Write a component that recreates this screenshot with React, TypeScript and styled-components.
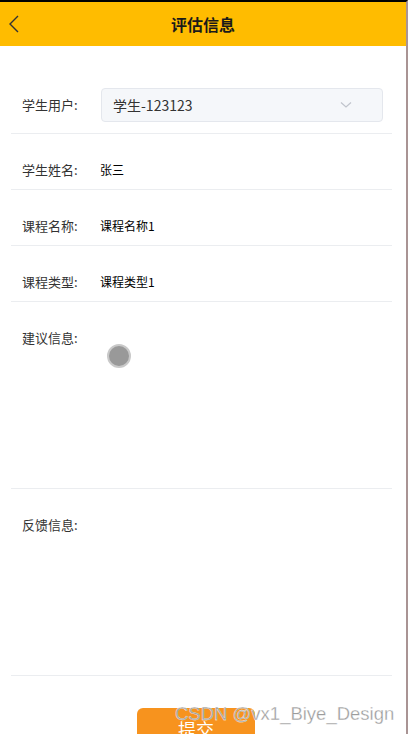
import styled, { createGlobalStyle } from 'styled-components';

const GlobalStyle = createGlobalStyle`
    html, body{
        margin: 0;
        padding: 0;
        background: #fff;
    }
    body{
        font-family: "Noto Sans CJK SC", "Noto Sans", sans-serif;
        color: #333;
    }
`;

const fields = [
    { label: '学生姓名:', value: '张三' },
    { label: '课程名称:', value: '课程名称1' },
    { label: '课程类型:', value: '课程类型1' },
];

export default function App() {
    return (
        <Page>
            <GlobalStyle />
            <Header>
                <BackButton>
                    <svg width="12" height="20" viewBox="0 0 12 20">
                        <path d="M10 2 L2 10 L10 18" fill="none" stroke="#333" strokeWidth="1.4" />
                    </svg>
                </BackButton>
                <Title>评估信息</Title>
            </Header>
            <Form>
                <Row $first>
                    <Label>学生用户:</Label>
                    <Select>
                        <span>学生-123123</span>
                        <svg width="12" height="8" viewBox="0 0 12 8">
                            <path d="M1 1.5 L6 6 L11 1.5" fill="none" stroke="#c0c4cc" strokeWidth="1.2" />
                        </svg>
                    </Select>
                </Row>
                {fields.map(f => (
                    <Row key={f.label}>
                        <Label>{f.label}</Label>
                        <Value>{f.value}</Value>
                    </Row>
                ))}
                <Row $tall>
                    <Label>建议信息:</Label>
                    <TextArea />
                </Row>
                <Row $tall>
                    <Label>反馈信息:</Label>
                    <TextArea />
                </Row>
                <Actions>
                    <SubmitButton>提交</SubmitButton>
                </Actions>
            </Form>
            <Cursor />
            <Watermark>CSDN @vx1_Biye_Design</Watermark>
        </Page>
    )
}

const Page = styled.div`
    position: relative;
    width: 408px;
    height: 734px;
    box-sizing: border-box;
    border-top: 2px solid #000;
    border-right: 2px solid #a99494;
    overflow: hidden;
    background: #fff;
`;

const Header = styled.div`
    position: relative;
    height: 44px;
    background-color: #ffbc00;
    display: flex;
    align-items: center;
    justify-content: center;
`;

const BackButton = styled.div`
    position: absolute;
    left: 8px;
    top: 12px;
    width: 12px;
    height: 20px;
    display: flex;
`;

const Title = styled.div`
    font-size: 16px;
    font-weight: bold;
    color: #1a1a1a;
`;

const Form = styled.div`
    padding-top: 15px;
`;

const Row = styled.div<{ $tall?: boolean; $first?: boolean }>`
    margin: 0 14px 0 11px;
    padding: ${({ $first }) => ($first ? '27px 0 11px 11px' : '27px 0 10px 11px')};
    border-bottom: 1px solid #ebedf0;
    display: flex;
    align-items: ${({ $tall }) => ($tall ? 'flex-start' : 'center')};
`;

const Label = styled.div`
    width: 79px;
    flex-shrink: 0;
    font-size: 13px;
    line-height: 18px;
    color: #333;
`;

const Value = styled.div`
    font-size: 12px;
    line-height: 18px;
    color: #000;
    margin-left: -1px;
`;

const Select = styled.div`
    width: 282px;
    height: 34px;
    box-sizing: border-box;
    background: #f5f7fa;
    border: 1px solid #e4e7ed;
    border-radius: 4px;
    display: flex;
    align-items: center;
    justify-content: space-between;
    padding: 0 30px 0 11px;
    font-size: 14px;
    color: #333;
`;

const TextArea = styled.div`
    flex: 1;
    height: 149px;
`;

const Actions = styled.div`
    display: flex;
    justify-content: center;
    padding: 32px 14px 0 0;
`;

const SubmitButton = styled.div`
    width: 118px;
    height: 40px;
    border-radius: 6px;
    background-color: #f7931e;
    color: #fff;
    font-size: 18px;
    display: flex;
    justify-content: center;
    padding-top: 8px;
    box-sizing: border-box;
`;

const Cursor = styled.div`
    position: absolute;
    left: 107px;
    top: 342px;
    width: 20px;
    height: 20px;
    border-radius: 50%;
    background: #999;
    border: 2px solid #c9c9c9;
`;

const Watermark = styled.div`
    position: absolute;
    left: 175px;
    top: 701px;
    font-family: "Liberation Sans", sans-serif;
    font-size: 18.5px;
    color: #9c9c9c;
    -webkit-text-stroke: 0.3px #fff;
    white-space: nowrap;
`;
